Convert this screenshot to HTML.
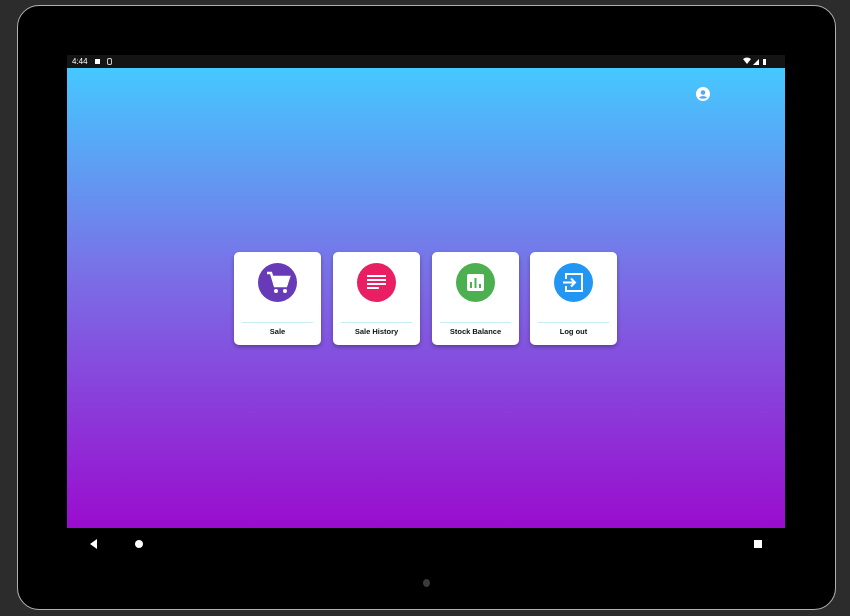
<!DOCTYPE html>
<html><head><style>
*{margin:0;padding:0;box-sizing:border-box}
body{width:850px;height:616px;background:#2c2c2c;position:relative;overflow:hidden;font-family:"Liberation Sans",sans-serif}
.dev{position:absolute;left:17px;top:5px;width:819px;height:605px;background:#000;border-radius:22px;border:1.5px solid #b0b0b0}
.status{position:absolute;left:67px;top:55px;width:718px;height:13px;background:#141414;color:#fff;font-size:8px;line-height:13px}
.app{position:absolute;left:67px;top:68px;width:718px;height:460px;background:linear-gradient(#45c8ff,#7a6fe6 45%,#9a0cce)}
.card{position:absolute;top:184px;width:87px;height:93px;background:#fff;border-radius:5px;box-shadow:0 2px 4px rgba(0,0,0,.3)}
.circ{position:absolute;left:24px;top:11px;width:39px;height:39px;border-radius:50%}
.circ svg{position:absolute;left:0;top:0}
.line{position:absolute;left:8px;right:8px;top:70px;height:1px;background:#c6eef8}
.lbl{position:absolute;left:0;right:0;top:75px;text-align:center;font-size:7.5px;font-weight:bold;color:#111}
</style></head><body>
<div class="dev"></div>
<div class="status"><span style="position:absolute;left:5px">4:44</span>
<span style="position:absolute;left:28px;top:4px;width:5px;height:5px;background:#fff"></span>
<span style="position:absolute;left:40px;top:3px;width:5px;height:7px;border:1px solid #ccc;border-radius:2px"></span>
<svg style="position:absolute;left:676px;top:2px" width="30" height="9"><path d="M0 2 Q4 -1 8 2 L4 7Z" fill="#fff"/><path d="M10 8 L16 2 V8Z" fill="#fff"/><rect x="20" y="2" width="3" height="6" fill="#fff"/></svg>
</div>
<div class="app">
<svg style="position:absolute;left:629px;top:19px" width="14" height="14" viewBox="0 0 14 14"><circle cx="7" cy="7" r="7" fill="#fff"/><circle cx="7" cy="5.5" r="2.3" fill="#5aa6f3"/><path d="M2.8 10.5 Q7 7.5 11.2 10.5 Q7 13 2.8 10.5Z" fill="#5aa6f3"/></svg>
<div class="card" style="left:167px"><div class="circ" style="background:#673ab7"><svg width="39" height="39"><path d="M9 10h4l4 13h11l3-9H15" fill="none" stroke="#fff" stroke-width="2.5"/><rect x="15" y="14" width="15" height="8" fill="#fff"/><circle cx="18" cy="28" r="2" fill="#fff"/><circle cx="27" cy="28" r="2" fill="#fff"/></svg></div><div class="line"></div><div class="lbl">Sale</div></div>
<div class="card" style="left:266px"><div class="circ" style="background:#e91e63"><svg width="39" height="39" fill="#fff"><rect x="10" y="12" width="19" height="2"/><rect x="10" y="16" width="19" height="2"/><rect x="10" y="20" width="19" height="2"/><rect x="10" y="24" width="12" height="2"/></svg></div><div class="line"></div><div class="lbl">Sale History</div></div>
<div class="card" style="left:365px"><div class="circ" style="background:#4caf50"><svg width="39" height="39"><rect x="11" y="11" width="17" height="17" rx="2" fill="#fff"/><rect x="14" y="19" width="2" height="6" fill="#4caf50"/><rect x="18.5" y="15" width="2" height="10" fill="#4caf50"/><rect x="23" y="21" width="2" height="4" fill="#4caf50"/></svg></div><div class="line"></div><div class="lbl">Stock Balance</div></div>
<div class="card" style="left:463px"><div class="circ" style="background:#2196f3"><svg width="39" height="39" fill="none" stroke="#fff" stroke-width="2"><path d="M12 16V11h16v17H12v-5"/><path d="M9 19.5h12M17 15.5l4 4-4 4"/></svg></div><div class="line"></div><div class="lbl">Log out</div></div>
</div>
<svg style="position:absolute;left:88px;top:539px" width="10" height="10"><path d="M9 0V10L2 5Z" fill="#fff"/></svg>
<div style="position:absolute;left:135px;top:540px;width:8px;height:8px;border-radius:50%;background:#fff"></div>
<div style="position:absolute;left:754px;top:540px;width:8px;height:8px;background:#fff"></div>
<div style="position:absolute;left:423px;top:579px;width:7px;height:8px;border-radius:50%;background:#3a3a3a"></div>
</body></html>
